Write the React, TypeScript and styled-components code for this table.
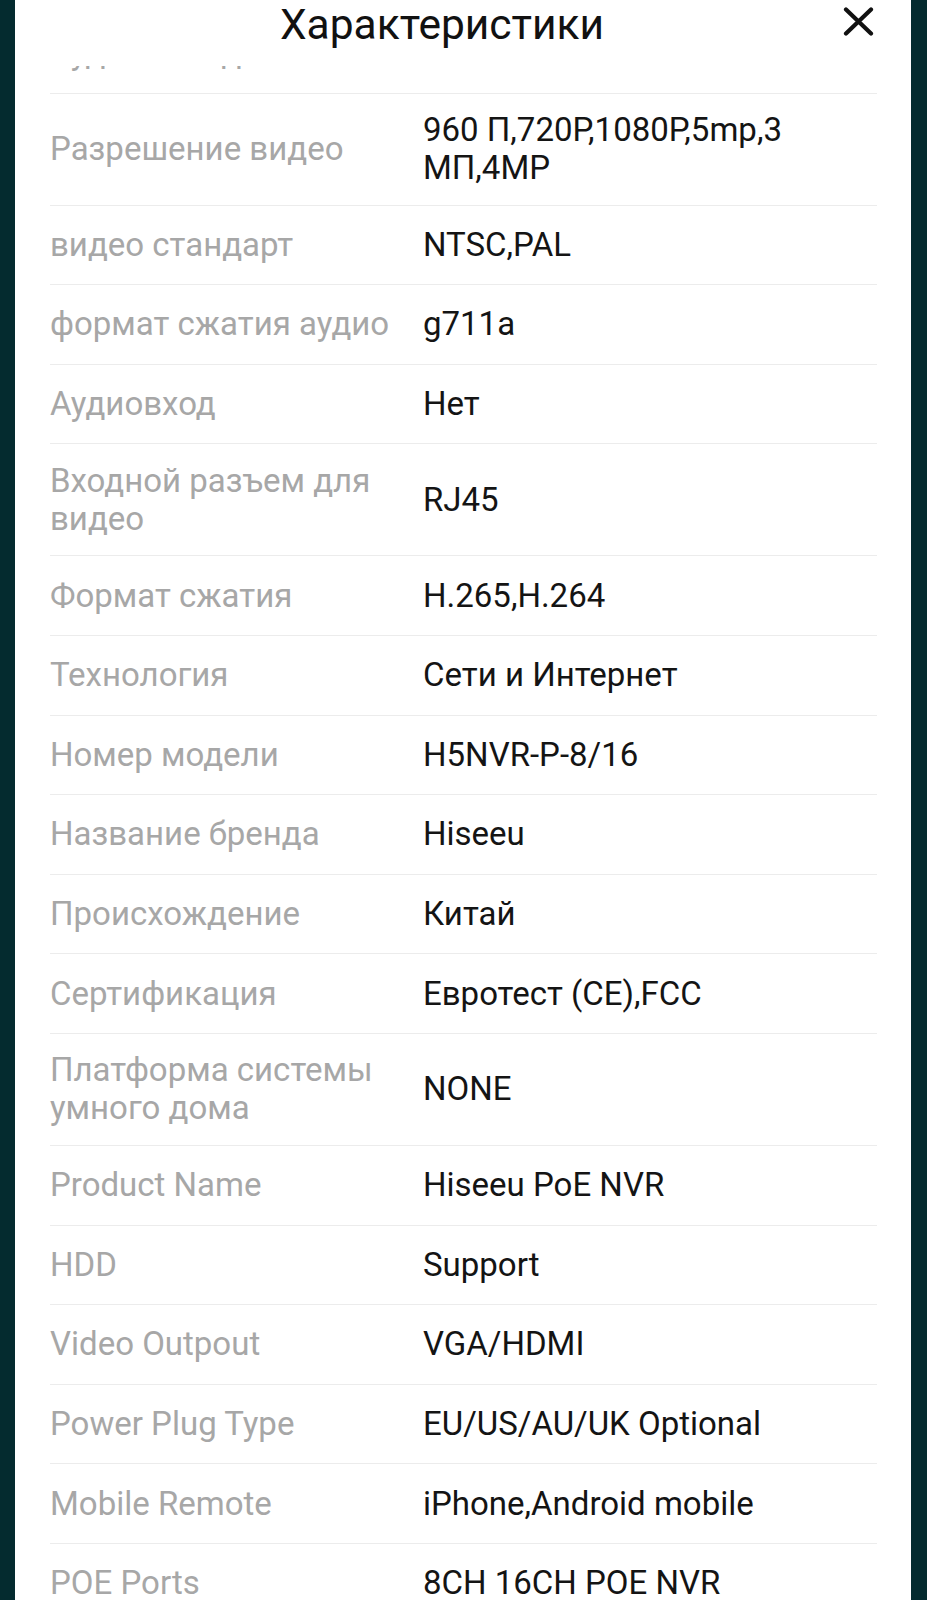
import React from 'react';
import styled, { createGlobalStyle } from 'styled-components';

const specs: [string, string][] = [
  ['Аудиовыход', 'Нет'],
  ['Разрешение видео', '960 П,720P,1080P,5mp,3 МП,4MP'],
  ['видео стандарт', 'NTSC,PAL'],
  ['формат сжатия аудио', 'g711a'],
  ['Аудиовход', 'Нет'],
  ['Входной разъем для видео', 'RJ45'],
  ['Формат сжатия', 'H.265,H.264'],
  ['Технология', 'Сети и Интернет'],
  ['Номер модели', 'H5NVR-P-8/16'],
  ['Название бренда', 'Hiseeu'],
  ['Происхождение', 'Китай'],
  ['Сертификация', 'Евротест (CE),FCC'],
  ['Платформа системы умного дома', 'NONE'],
  ['Product Name', 'Hiseeu PoE NVR'],
  ['HDD', 'Support'],
  ['Video Outpout', 'VGA/HDMI'],
  ['Power Plug Type', 'EU/US/AU/UK Optional'],
  ['Mobile Remote', 'iPhone,Android mobile'],
  ['POE Ports', '8CH 16CH POE NVR'],
];

const GlobalStyle = createGlobalStyle`
  html, body {
    margin: 0;
    padding: 0;
    background: #042b2f;
  }
  * {
    box-sizing: border-box;
  }
`;

const App = () => {
  return (
    <Screen>
      <GlobalStyle />
      <Sheet>
        <Header>
          <Title>Характеристики</Title>
          <CloseButton aria-label="Закрыть">
            <svg width="31" height="29" viewBox="0 0 31 29">
              <path
                d="M3 2.5 L28 26.5 M28 2.5 L3 26.5"
                stroke="#111"
                strokeWidth="4.2"
                strokeLinecap="round"
                fill="none"
              />
            </svg>
          </CloseButton>
        </Header>
        <Body>
          <List>
            {specs.map(([label, value]) => (
              <Row key={label}>
                <Label>{label}</Label>
                <Value>{value}</Value>
              </Row>
            ))}
          </List>
        </Body>
      </Sheet>
    </Screen>
  );
};

export default App;

const Screen = styled.div`
  height: 1600px;
  padding: 0 16px 0 15px;
  overflow: hidden;
  font-family: Roboto, 'Noto Sans', sans-serif;
`;

const Sheet = styled.div`
  height: 100%;
  background: #ffffff;
  display: flex;
  flex-direction: column;
`;

const Header = styled.div`
  height: 66px;
  flex-shrink: 0;
  display: flex;
  align-items: flex-start;
  padding-right: 37px;
`;

const Title = styled.h1`
  flex: 1;
  margin: 0;
  padding: 3px 0 0 26px;
  text-align: center;
  font-size: 42.5px;
  line-height: 44px;
  font-weight: 400;
  color: #111111;
`;

const CloseButton = styled.button`
  width: 31px;
  height: 29px;
  margin-top: 7px;
  padding: 0;
  border: none;
  background: none;
  display: flex;
`;

const Body = styled.div`
  flex: 1;
  overflow: hidden;
`;

const List = styled.div`
  /* scrolled: first row sits under the header */
  margin: -52px 34px 0 35px;
`;

const Row = styled.div`
  display: grid;
  grid-template-columns: 373px 1fr;
  align-items: center;
  min-height: 79.6px;
  padding: 17.5px 0;
  border-bottom: 1px solid #ececec;
  font-size: 33px;
  line-height: 38px;
`;

const Label = styled.div`
  color: #a7a7a7;
  padding-right: 8px;
`;

const Value = styled.div`
  color: #141414;
`;
